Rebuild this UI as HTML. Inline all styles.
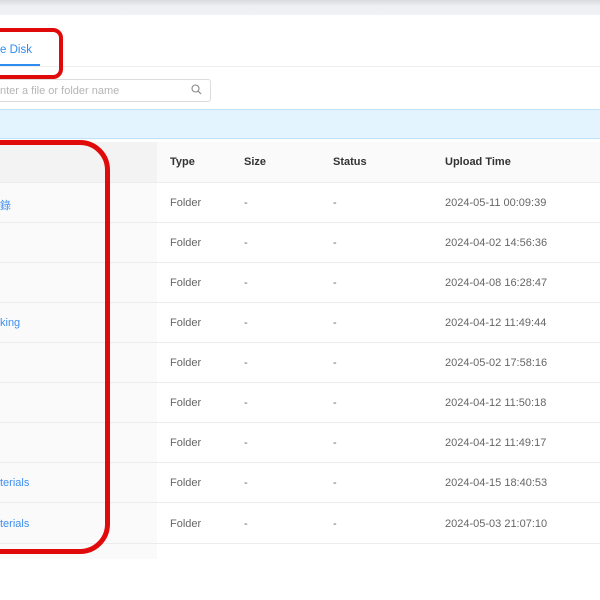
<!DOCTYPE html>
<html><head><style>
body{margin:0;width:600px;height:600px;overflow:hidden;background:#fff;font-family:"Liberation Sans","Noto Sans CJK TC",sans-serif;position:relative}
.a{position:absolute}
.row{position:absolute;left:0;width:600px;height:40px;border-bottom:1px solid #ececec;font-size:11px;color:#666}
.row span{position:absolute;top:15px}
.row .n{color:#3f8ff0}
.h span{position:absolute;top:14px;font-size:11px;font-weight:bold;color:#333}
</style></head><body>
<div class="a" style="left:0;top:0;width:600px;height:15px;background:linear-gradient(#d9dadd,#eef0f3 40%,#eff1f4)"></div>
<div class="a" style="left:0;top:44px;font-size:11.5px;color:#2f8cf0">e Disk</div>
<div class="a" style="left:0;top:64px;width:40px;height:2px;background:#2f8cf0"></div>
<div class="a" style="left:0;top:66px;width:600px;height:1px;background:#eeeeee"></div>
<div class="a" style="left:-10px;top:79px;width:219px;height:21px;border:1px solid #dcdcdc;border-radius:3px"></div>
<div class="a" style="left:0;top:85px;font-size:11px;color:#b5b5b5">nter a file or folder name</div>
<svg class="a" style="left:191px;top:84px" width="11" height="11" viewBox="0 0 11 11"><circle cx="4.5" cy="4.5" r="3.5" fill="none" stroke="#888" stroke-width="1.1"/><path d="M7 7l3 3" stroke="#888" stroke-width="1.2"/></svg>
<div class="a" style="left:0;top:109px;width:600px;height:28px;background:#e4f4fe;border-top:1px solid #bfe3fb;border-bottom:1px solid #bfe3fb"></div>
<div class="a h" style="left:0;top:142px;width:600px;height:40px;background:#fafafa;border-bottom:1px solid #ececec">
<div class="a" style="left:0;top:0;width:157px;height:40px;background:#f3f3f3"></div>
<span style="left:170px">Type</span><span style="left:244px">Size</span><span style="left:333px">Status</span><span style="left:445px">Upload Time</span></div>
<div class="a" style="left:0;top:183px;width:157px;height:376px;background:#fafafa"></div>
<div class="row" style="top:182px"><span class="n" style="left:0">錄</span><span style="left:170px">Folder</span><span style="left:244px">-</span><span style="left:333px">-</span><span style="left:445px">2024-05-11 00:09:39</span></div>
<div class="row" style="top:222px"><span style="left:170px">Folder</span><span style="left:244px">-</span><span style="left:333px">-</span><span style="left:445px">2024-04-02 14:56:36</span></div>
<div class="row" style="top:262px"><span style="left:170px">Folder</span><span style="left:244px">-</span><span style="left:333px">-</span><span style="left:445px">2024-04-08 16:28:47</span></div>
<div class="row" style="top:302px"><span class="n" style="left:0">king</span><span style="left:170px">Folder</span><span style="left:244px">-</span><span style="left:333px">-</span><span style="left:445px">2024-04-12 11:49:44</span></div>
<div class="row" style="top:342px"><span style="left:170px">Folder</span><span style="left:244px">-</span><span style="left:333px">-</span><span style="left:445px">2024-05-02 17:58:16</span></div>
<div class="row" style="top:382px"><span style="left:170px">Folder</span><span style="left:244px">-</span><span style="left:333px">-</span><span style="left:445px">2024-04-12 11:50:18</span></div>
<div class="row" style="top:422px"><span style="left:170px">Folder</span><span style="left:244px">-</span><span style="left:333px">-</span><span style="left:445px">2024-04-12 11:49:17</span></div>
<div class="row" style="top:462px"><span class="n" style="left:0">terials</span><span style="left:170px">Folder</span><span style="left:244px">-</span><span style="left:333px">-</span><span style="left:445px">2024-04-15 18:40:53</span></div>
<div class="row" style="top:503px"><span class="n" style="left:0">terials</span><span style="left:170px">Folder</span><span style="left:244px">-</span><span style="left:333px">-</span><span style="left:445px">2024-05-03 21:07:10</span></div>
<div class="a" style="left:-20px;top:28px;width:75px;height:43px;border:4px solid #e00a0a;border-radius:10px"></div>
<div class="a" style="left:-40px;top:140px;width:140px;height:404px;border:5px solid #e00a0a;border-radius:30px"></div>
</body></html>
